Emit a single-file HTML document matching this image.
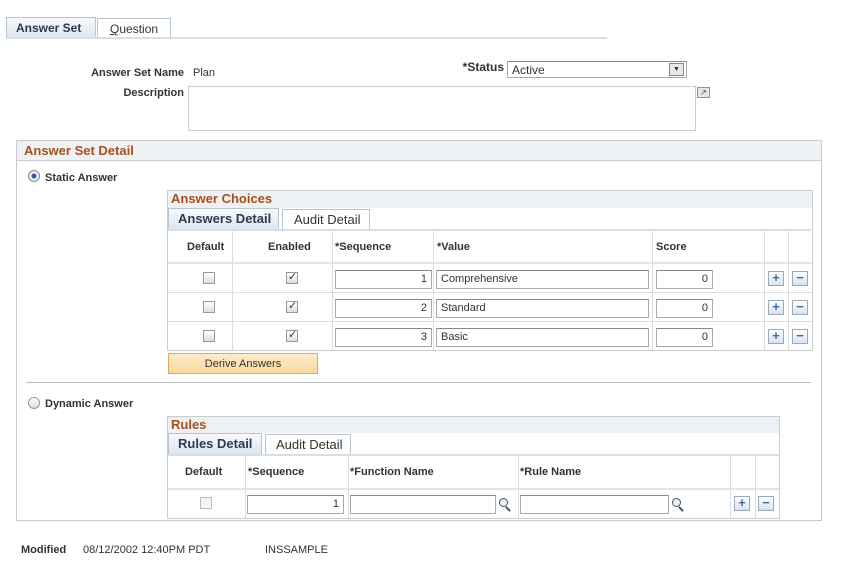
<!DOCTYPE html><html><head><style>
*{box-sizing:border-box;margin:0;padding:0}
body{width:866px;height:568px;background:#fff;font-family:"Liberation Sans",Arial,sans-serif;font-size:11px;color:#333;position:relative;overflow:hidden}
.a{position:absolute}
.b{font-weight:bold}
.tab{position:absolute;border:1px solid #b8c4d0;border-bottom:none;background:#fff;font-size:12px;padding-left:9px;line-height:20px;color:#333}
.tab.on{background:linear-gradient(#f8fafc,#dde6ef);font-weight:bold;color:#2a3c4e}
.inp{position:absolute;border:1px solid #aaa;border-top-color:#888;background:#fff;font-size:11px;line-height:17px;padding:0 4px;height:19px}
.r{text-align:right}
.cb{position:absolute;width:12px;height:12px;border:1px solid #999;background:linear-gradient(#fff,#ddd)}
.ck::after{content:"✓";position:absolute;left:1px;top:-3px;font-size:11px;color:#335}
.btn{position:absolute;width:16px;height:15px;border:1px solid #9ab;background:linear-gradient(#fff,#d8e2ec);color:#3a6ea5;font-weight:bold;font-size:13px;line-height:12px;text-align:center}
.grid{position:absolute;border:1px solid #ccc}
.gh{position:absolute;background:#eef1f4;color:#a5501c;font-weight:bold;font-size:13px;padding-left:3px}
.th{position:absolute;font-weight:bold;font-size:11px;color:#333}
.vl{position:absolute;width:1px;background:#ddd}
.hl{position:absolute;height:1px;background:#ddd}
.mag{position:absolute;width:9px;height:9px;border:1.5px solid #456;border-radius:50%;background:#e8f0f8}
.mag::after{content:"";position:absolute;left:7px;top:7px;width:2px;height:6px;background:#456;transform:rotate(-45deg)}
</style></head><body>
<div class="tab on" style="left:6px;top:17px;width:90px;height:21px">Answer Set</div>
<div class="tab" style="left:97px;top:18px;width:74px;height:20px;padding-left:12px"><u>Q</u>uestion</div>
<div class="a" style="left:6px;top:37px;width:601px;height:2px;background:#d5e0ea"></div>

<div class="a b" style="left:40px;top:67px;width:144px;text-align:right">Answer Set Name</div>
<div class="a" style="left:193px;top:67px">Plan</div>
<div class="a b" style="left:40px;top:87px;width:144px;text-align:right">Description</div>
<div class="a" style="left:188px;top:86px;width:508px;height:45px;border:1px solid #ccc"></div>
<div class="a" style="left:697px;top:87px;width:13px;height:11px;border:1px solid #7f98b0;background:#dfe8f0;font-size:8px;line-height:9px;text-align:center;color:#345">↗</div>
<div class="a b" style="left:440px;top:60px;width:64px;text-align:right;font-size:12px">*Status</div>
<div class="inp" style="left:507px;top:61px;width:180px;height:17px;line-height:16px;font-size:12px">Active</div>
<div class="a" style="left:669px;top:63px;width:15px;height:13px;border:1px solid #888;background:#e8e8e8;font-size:7px;text-align:center;line-height:12px">▼</div>

<div class="a" style="left:16px;top:140px;width:806px;height:381px;border:1px solid #c8ccd0"></div>
<div class="a" style="left:17px;top:141px;width:804px;height:20px;background:#eff2f4;border-bottom:1px solid #c8ccd0;color:#a5501c;font-weight:bold;font-size:13px;padding:2px 0 0 7px">Answer Set Detail</div>

<div class="a" style="left:28px;top:170px;width:12px;height:12px;border-radius:50%;border:1px solid #888;background:radial-gradient(#2a5aa0 30%,#eee 40%)"></div>
<div class="a b" style="left:45px;top:172px">Static Answer</div>

<div class="grid" style="left:167px;top:190px;width:646px;height:161px"></div>
<div class="gh" style="left:168px;top:191px;width:644px;height:17px">Answer Choices</div>
<div class="tab on" style="left:168px;top:208px;width:111px;height:21px;font-size:13px;font-weight:bold">Answers Detail</div>
<div class="tab" style="left:282px;top:209px;width:88px;height:20px;font-size:13px;padding-left:11px">Audit Detail</div>
<div class="hl" style="left:168px;top:229px;width:643px;height:2px;background:#d5e0ea"></div>
<div class="hl" style="left:168px;top:262px;width:644px;height:2px;background:#e4e4e4"></div>
<div class="hl" style="left:168px;top:292px;width:644px"></div>
<div class="hl" style="left:168px;top:321px;width:644px"></div>
<div class="vl" style="left:232px;top:231px;height:119px"></div>
<div class="vl" style="left:332px;top:231px;height:119px"></div>
<div class="vl" style="left:433px;top:231px;height:119px"></div>
<div class="vl" style="left:652px;top:231px;height:119px"></div>
<div class="vl" style="left:764px;top:231px;height:119px"></div>
<div class="vl" style="left:788px;top:231px;height:119px"></div>
<div class="th" style="left:187px;top:241px">Default</div>
<div class="th" style="left:268px;top:241px">Enabled</div>
<div class="th" style="left:335px;top:241px">*Sequence</div>
<div class="th" style="left:437px;top:241px">*Value</div>
<div class="th" style="left:656px;top:241px">Score</div>

<div class="cb" style="left:203px;top:272px"></div><div class="cb ck" style="left:286px;top:272px"></div>
<div class="inp r" style="left:335px;top:270px;width:97px">1</div><div class="inp" style="left:436px;top:270px;width:213px">Comprehensive</div><div class="inp r" style="left:656px;top:270px;width:57px">0</div>
<div class="btn" style="left:768px;top:271px">+</div><div class="btn" style="left:792px;top:271px">−</div>

<div class="cb" style="left:203px;top:301px"></div><div class="cb ck" style="left:286px;top:301px"></div>
<div class="inp r" style="left:335px;top:299px;width:97px">2</div><div class="inp" style="left:436px;top:299px;width:213px">Standard</div><div class="inp r" style="left:656px;top:299px;width:57px">0</div>
<div class="btn" style="left:768px;top:300px">+</div><div class="btn" style="left:792px;top:300px">−</div>

<div class="cb" style="left:203px;top:330px"></div><div class="cb ck" style="left:286px;top:330px"></div>
<div class="inp r" style="left:335px;top:328px;width:97px">3</div><div class="inp" style="left:436px;top:328px;width:213px">Basic</div><div class="inp r" style="left:656px;top:328px;width:57px">0</div>
<div class="btn" style="left:768px;top:329px">+</div><div class="btn" style="left:792px;top:329px">−</div>

<div class="a" style="left:168px;top:353px;width:150px;height:21px;background:linear-gradient(#fdebc8,#f9d9a0);border:1px solid #e0a860;text-align:center;line-height:20px">Derive Answers</div>

<div class="a" style="left:26px;top:382px;width:785px;height:1px;background:#bbb"></div>

<div class="a" style="left:28px;top:397px;width:12px;height:12px;border-radius:50%;border:1px solid #999;background:linear-gradient(#fff,#ddd)"></div>
<div class="a b" style="left:45px;top:398px">Dynamic Answer</div>

<div class="grid" style="left:167px;top:416px;width:613px;height:103px"></div>
<div class="gh" style="left:168px;top:417px;width:611px;height:16px">Rules</div>
<div class="tab on" style="left:168px;top:433px;width:94px;height:21px;font-size:13px;font-weight:bold">Rules Detail</div>
<div class="tab" style="left:265px;top:434px;width:86px;height:20px;font-size:13px;padding-left:10px">Audit Detail</div>
<div class="hl" style="left:168px;top:454px;width:611px;height:2px;background:#d5e0ea"></div>
<div class="hl" style="left:168px;top:488px;width:611px;height:2px;background:#e4e4e4"></div>
<div class="vl" style="left:245px;top:456px;height:62px"></div>
<div class="vl" style="left:348px;top:456px;height:62px"></div>
<div class="vl" style="left:518px;top:456px;height:62px"></div>
<div class="vl" style="left:730px;top:456px;height:62px"></div>
<div class="vl" style="left:755px;top:456px;height:62px"></div>
<div class="th" style="left:185px;top:466px">Default</div>
<div class="th" style="left:248px;top:466px">*Sequence</div>
<div class="th" style="left:350px;top:466px">*Function Name</div>
<div class="th" style="left:520px;top:466px">*Rule Name</div>
<div class="cb" style="left:200px;top:497px;border-color:#bbb;background:#f4f4f4"></div>
<div class="inp r" style="left:247px;top:495px;width:97px">1</div>
<div class="inp" style="left:350px;top:495px;width:146px"></div>
<div class="mag" style="left:499px;top:498px"></div>
<div class="inp" style="left:520px;top:495px;width:149px"></div>
<div class="mag" style="left:672px;top:498px"></div>
<div class="btn" style="left:734px;top:496px">+</div><div class="btn" style="left:758px;top:496px">−</div>

<div class="a b" style="left:21px;top:544px">Modified</div>
<div class="a" style="left:83px;top:544px">08/12/2002 12:40PM PDT</div>
<div class="a" style="left:265px;top:544px">INSSAMPLE</div>
</body></html>
